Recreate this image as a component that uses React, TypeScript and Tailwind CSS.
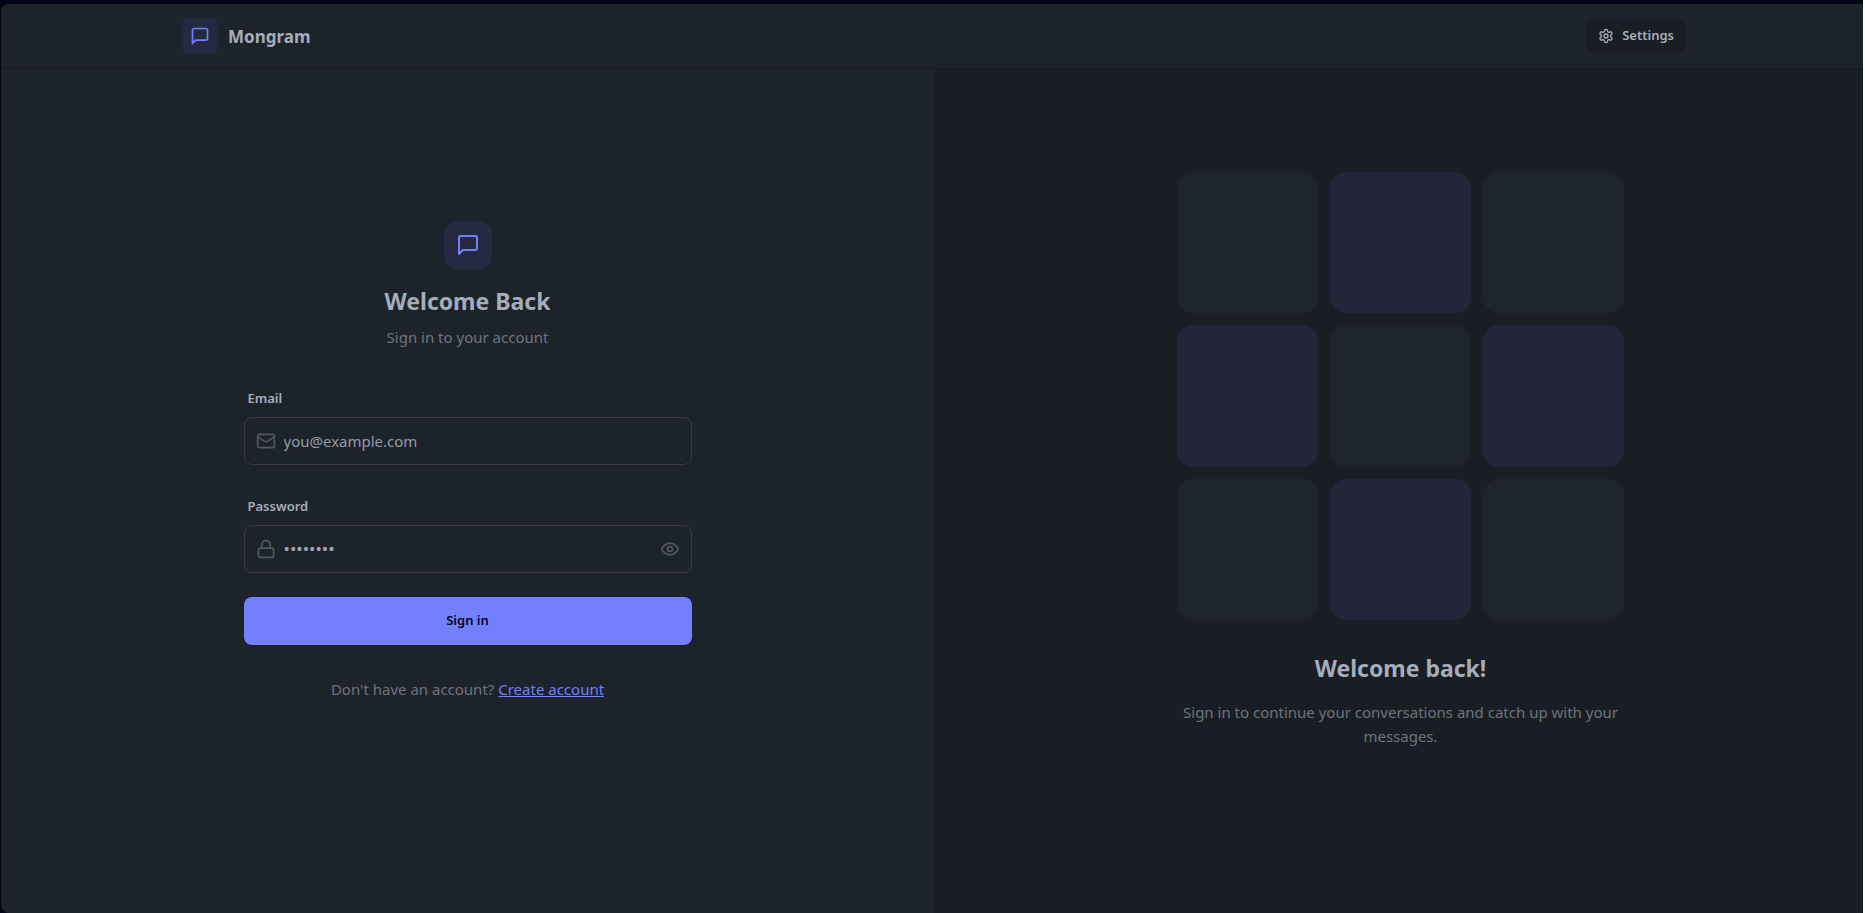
import { useState } from "react";
import type { ReactNode } from "react";

type IconProps = { className?: string };

function Icon({ className, children }: IconProps & { children: ReactNode }) {
  return (
    <svg
      viewBox="0 0 24 24"
      fill="none"
      stroke="currentColor"
      strokeWidth="2"
      strokeLinecap="round"
      strokeLinejoin="round"
      aria-hidden="true"
      className={className}
    >
      {children}
    </svg>
  );
}

function MessageIcon({ className }: IconProps) {
  return (
    <Icon className={className}>
      <path d="M21 15a2 2 0 0 1-2 2H7l-4 4V5a2 2 0 0 1 2-2h14a2 2 0 0 1 2 2z" />
    </Icon>
  );
}

function MailIcon({ className }: IconProps) {
  return (
    <Icon className={className}>
      <rect width="20" height="16" x="2" y="4" rx="2" />
      <path d="m22 7-8.97 5.7a1.94 1.94 0 0 1-2.06 0L2 7" />
    </Icon>
  );
}

function LockIcon({ className }: IconProps) {
  return (
    <Icon className={className}>
      <rect width="18" height="11" x="3" y="11" rx="2" ry="2" />
      <path d="M7 11V7a5 5 0 0 1 10 0v4" />
    </Icon>
  );
}

function EyeIcon({ className }: IconProps) {
  return (
    <Icon className={className}>
      <path d="M2 12s3-7 10-7 10 7 10 7-3 7-10 7-10-7-10-7Z" />
      <circle cx="12" cy="12" r="3" />
    </Icon>
  );
}

function SettingsIcon({ className }: IconProps) {
  return (
    <Icon className={className}>
      <path d="M12.22 2h-.44a2 2 0 0 0-2 2v.18a2 2 0 0 1-1 1.73l-.43.25a2 2 0 0 1-2 0l-.15-.08a2 2 0 0 0-2.73.73l-.22.38a2 2 0 0 0 .73 2.73l.15.1a2 2 0 0 1 1 1.72v.51a2 2 0 0 1-1 1.74l-.15.09a2 2 0 0 0-.73 2.73l.22.38a2 2 0 0 0 2.73.73l.15-.08a2 2 0 0 1 2 0l.43.25a2 2 0 0 1 1 1.73V20a2 2 0 0 0 2 2h.44a2 2 0 0 0 2-2v-.18a2 2 0 0 1 1-1.73l.43-.25a2 2 0 0 1 2 0l.15.08a2 2 0 0 0 2.73-.73l.22-.39a2 2 0 0 0-.73-2.73l-.15-.08a2 2 0 0 1-1-1.74v-.5a2 2 0 0 1 1-1.74l.15-.09a2 2 0 0 0 .73-2.73l-.22-.38a2 2 0 0 0-2.73-.73l-.15.08a2 2 0 0 1-2 0l-.43-.25a2 2 0 0 1-1-1.73V4a2 2 0 0 0-2-2z" />
      <circle cx="12" cy="12" r="3" />
    </Icon>
  );
}

function Header() {
  return (
    <header className="border-b border-[#15191e] bg-[#1d232a]">
      <div className="mx-auto flex h-16 w-full max-w-[1536px] items-center justify-between px-4">
        <a href="#" className="flex items-center gap-2.5">
          <span className="flex size-9 items-center justify-center rounded-lg bg-[#262a40]">
            <MessageIcon className="size-5 text-[#747fff]" />
          </span>
          <span className="pt-0.5 text-[17px] font-bold">Mongram</span>
        </a>
        <button
          type="button"
          className="flex h-8 items-center gap-2 rounded-lg bg-[#191e24] px-3 text-[13px] font-semibold"
        >
          <SettingsIcon className="size-4" />
          Settings
        </button>
      </div>
    </header>
  );
}

function LoginForm() {
  const [shown, setShown] = useState(false);
  return (
    <div className="w-full max-w-md">
      <div className="mb-8 flex flex-col items-center text-center">
        <div className="flex size-12 items-center justify-center rounded-xl bg-[#262a40]">
          <MessageIcon className="size-6 text-[#747fff]" />
        </div>
        <h1 className="mt-4 text-[23px] leading-8 font-bold">Welcome Back</h1>
        <p className="mt-2 text-[15px] leading-6 text-[#6f747f]">Sign in to your account</p>
      </div>
      <form className="flex flex-col gap-6" onSubmit={(e) => e.preventDefault()}>
        <div>
          <label htmlFor="email" className="flex h-9 items-center px-1 text-[13px] font-semibold">
            Email
          </label>
          <div className="flex h-12 items-center gap-2 rounded-lg border border-[#363b43] px-[11px]">
            <MailIcon className="size-5 shrink-0 text-[#525862]" />
            <input
              id="email"
              type="email"
              placeholder="you@example.com"
              className="min-w-0 flex-1 bg-transparent text-[15px] outline-none placeholder:text-[#949ba8]"
            />
          </div>
        </div>
        <div>
          <label htmlFor="password" className="flex h-9 items-center px-1 text-[13px] font-semibold">
            Password
          </label>
          <div className="flex h-12 items-center gap-2 rounded-lg border border-[#363b43] px-[11px]">
            <LockIcon className="size-5 shrink-0 text-[#525862]" />
            <input
              id="password"
              type={shown ? "text" : "password"}
              placeholder="••••••••"
              className="min-w-0 flex-1 bg-transparent text-[17px] outline-none placeholder:text-[#a0a7b4]"
            />
            <button type="button" aria-label="Show password" onClick={() => setShown(!shown)}>
              <EyeIcon className="size-5 text-[#525862]" />
            </button>
          </div>
        </div>
        <button type="submit" className="h-12 rounded-lg bg-[#747fff] text-[13px] font-semibold text-[#050617]">
          Sign in
        </button>
      </form>
      <p className="mt-8 text-center text-[15px] leading-6 text-[#6f747f]">
        Don't have an account?{" "}
        <a href="#" className="text-[#747fff] underline">
          Create account
        </a>
      </p>
    </div>
  );
}

function PatternPanel() {
  return (
    <div className="w-full max-w-md text-center">
      <div className="mb-8 grid grid-cols-3 gap-3">
        {Array.from({ length: 9 }, (_, i) => (
          <div key={i} className={`aspect-square rounded-2xl ${i % 2 ? "bg-[#232639]" : "bg-[#1e242d]"}`} />
        ))}
      </div>
      <h2 className="mb-4 text-[23px] leading-8 font-bold">Welcome back!</h2>
      <p className="text-[15px] leading-6 text-[#6f747f]">
        Sign in to continue your conversations and catch up with your messages.
      </p>
    </div>
  );
}

export default function App() {
  return (
    <div className="flex min-h-screen flex-col overflow-hidden border-r-2 border-white bg-[#020617] pt-1 pl-px font-['Noto_Sans',sans-serif] text-[#a6adbb]">
      <div className="-mr-1 flex flex-1 flex-col overflow-hidden rounded-lg bg-[#1d232a]">
        <Header />
        <main className="grid flex-1 grid-cols-2">
          <section className="flex items-center justify-center pb-15">
            <LoginForm />
          </section>
          <section className="flex items-center justify-center bg-[#191e24] pb-[62px]">
            <PatternPanel />
          </section>
        </main>
      </div>
    </div>
  );
}
